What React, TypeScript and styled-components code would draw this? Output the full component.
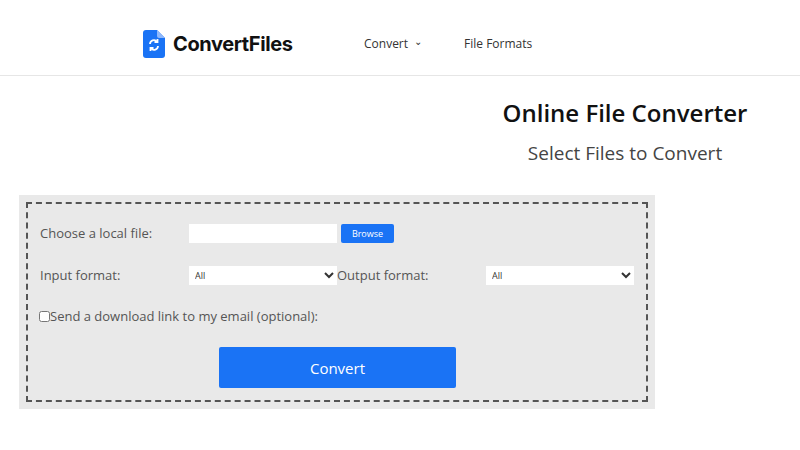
import styled, { createGlobalStyle } from 'styled-components';

const Global = createGlobalStyle`
  body {
    margin: 0;
    background: #ffffff;
    font-family: 'Open Sans', 'Noto Sans', sans-serif;
  }
`;

const App = () => {
  return (
    <>
      <Global />
      <Header>
        <Logo>
          <svg width='22' height='28' viewBox='0 0 22 28'>
            <path d='M3 0h11l8 8v17a3 3 0 0 1-3 3H3a3 3 0 0 1-3-3V3a3 3 0 0 1 3-3z' fill='#1a73f5' />
            <path d='M14 0v6a2 2 0 0 0 2 2h6z' fill='#8fb8fb' />
            <path d='M7 14a4 4 0 0 1 7-2.5M15 16a4 4 0 0 1-7 2.5' stroke='#fff' strokeWidth='1.8' fill='none' />
            <path d='M14.5 9v3h-3M7.5 21v-3h3' stroke='#fff' strokeWidth='1.8' fill='none' />
          </svg>
          <span>ConvertFiles</span>
        </Logo>
        <Nav>
          <NavItem>
            Convert <Caret>⌄</Caret>
          </NavItem>
          <NavItem>File Formats</NavItem>
        </Nav>
      </Header>
      <Hero>
        <Title>Online File Converter</Title>
        <Subtitle>Select Files to Convert</Subtitle>
      </Hero>
      <Panel>
        <Dashed>
          <Row>
            <Label>Choose a local file:</Label>
            <FileInput />
            <Browse>Browse</Browse>
          </Row>
          <Row>
            <Label>Input format:</Label>
            <Select>
              <option>All</option>
            </Select>
            <Label $w={149}>Output format:</Label>
            <Select>
              <option>All</option>
            </Select>
          </Row>
          <CheckRow>
            <input type='checkbox' />
            Send a download link to my email (optional):
          </CheckRow>
          <ButtonRow>
            <ConvertButton>Convert</ConvertButton>
          </ButtonRow>
        </Dashed>
      </Panel>
    </>
  );
};

const Header = styled.header`
  height: 76px;
  border-bottom: 1px solid #e6e6e6;
  display: flex;
  align-items: center;
  padding: 12px 0 0 143px;
  box-sizing: border-box;
`;

const Logo = styled.div`
  display: flex;
  align-items: center;
  gap: 8px;
  font-family: 'Inter', 'Open Sans', sans-serif;
  font-weight: 700;
  font-size: 20px;
  color: #111;
  letter-spacing: -0.4px;
  width: 221px;
`;

const Nav = styled.nav`
  display: flex;
  gap: 42px;
  font-size: 12px;
  color: #333;
`;

const NavItem = styled.span`
  display: flex;
  align-items: center;
  gap: 6px;
`;

const Caret = styled.span`
  font-size: 10px;
  position: relative;
  top: -3px;
`;

const Hero = styled.div`
  padding-left: 450px;
  text-align: center;
  margin-top: 20px;
`;

const Title = styled.h1`
  margin: 0;
  font-size: 24px;
  font-weight: 600;
  color: #111;
  line-height: 34px;
`;

const Subtitle = styled.h2`
  margin: 9px 0 0;
  font-size: 19px;
  font-weight: 400;
  color: #444;
  line-height: 28px;
`;

const Panel = styled.div`
  margin: 28px 0 0 19px;
  width: 636px;
  height: 214px;
  background: #e9e9e9;
  padding: 7px;
  box-sizing: border-box;
`;

const Dashed = styled.div`
  border: 2px dashed #555;
  height: 100%;
  box-sizing: border-box;
  padding: 19px 0 0 12px;
  display: flex;
  flex-direction: column;
`;

const Row = styled.div`
  display: flex;
  align-items: center;
  height: 20px;
  margin-bottom: 22px;
  font-size: 13px;
  color: #555;
`;

const Label = styled.span<{ $w?: number }>`
  width: ${p => p.$w ?? 149}px;
  font-size: 13px;
  color: #555;
`;

const FileInput = styled.div`
  width: 148px;
  height: 19px;
  background: #fff;
  margin-right: 4px;
`;

const Browse = styled.button`
  height: 19px;
  width: 53px;
  border: none;
  border-radius: 2px;
  background: #1a73f5;
  color: #fff;
  font-family: inherit;
  font-size: 9px;
  padding: 0;
`;

const Select = styled.select`
  width: 148px;
  height: 19px;
  background: #fff;
  border: none;
  font-family: inherit;
  font-size: 9px;
  color: #333;
  padding: 0 2px;
`;

const CheckRow = styled.label`
  display: flex;
  align-items: center;
  font-size: 13px;
  color: #555;
  margin-left: -1px;
  margin-top: 0;
  & input {
    margin: 0;
    width: 11px;
    height: 11px;
  }
`;

const ButtonRow = styled.div`
  margin-top: 22px;
  padding-left: 179px;
`;

const ConvertButton = styled.button`
  width: 237px;
  height: 41px;
  border: none;
  border-radius: 2px;
  background: #1a73f5;
  color: #fff;
  font-family: inherit;
  font-size: 15px;
`;

export default App;
